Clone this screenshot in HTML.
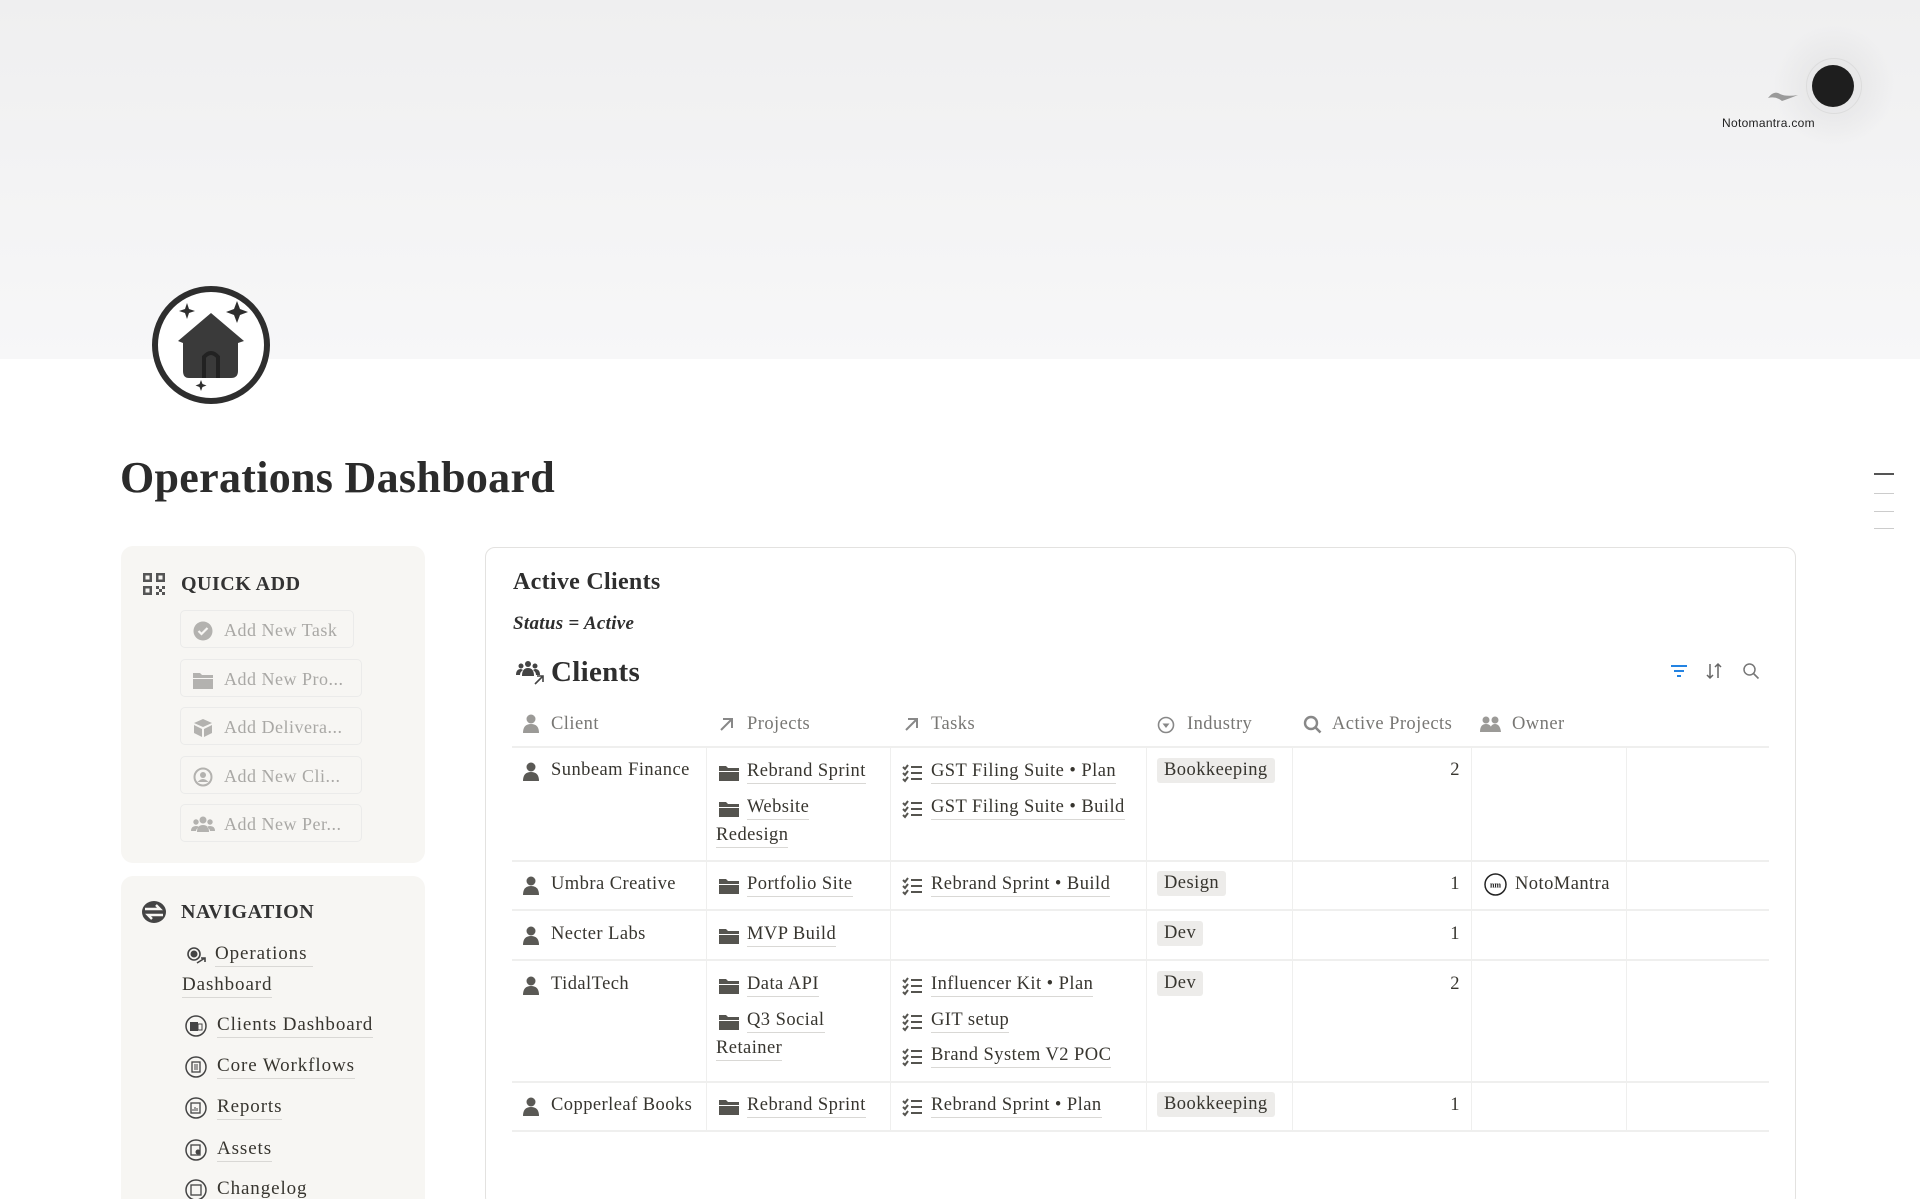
<!DOCTYPE html>
<html style="overflow:hidden;width:1920px;height:1199px"><head><meta charset="utf-8"><style>
*{margin:0;padding:0;box-sizing:border-box}
body{width:1920px;height:1199px;overflow:hidden;background:#fff;position:relative;font-family:"Liberation Serif",serif;color:#37352f}
.a{position:absolute}
.t{position:absolute;font-size:18.5px;line-height:24px;white-space:nowrap;color:#37352f;letter-spacing:0.45px}
.n{font-size:19px;letter-spacing:0.9px}
.u{border-bottom:1px solid #d9d8d5}
.h{color:#787774}
.btn{position:absolute;left:180px;height:38px;border:1px solid #ebebea;border-radius:5px;background:#f7f6f3}
.btn span{position:absolute;left:43px;top:7px;font-size:18px;line-height:24px;color:#a9a8a5;white-space:nowrap;letter-spacing:0.5px}
.btn svg{position:absolute;left:12px;top:10px}
.hl{position:absolute;left:512px;width:1257px;height:2px;background:#efefee}
.vl{position:absolute;width:1px;background:#efefee}
.tag{position:absolute;height:25px;padding:0 7px;background:#edecea;border-radius:3px;font-size:18.5px;line-height:25px;color:#37352f;letter-spacing:0.45px}
</style></head><body>
<div class="a" style="left:0;top:0;width:1920px;height:359px;background:linear-gradient(#efeff0,#f7f7f8)"></div>
<div class="a" style="left:1773px;top:25px;width:122px;height:122px;border-radius:50%;background:radial-gradient(circle,#e2e2e3 0%,rgba(240,240,241,0) 70%)"></div>
<div class="a" style="left:1806px;top:58px;width:56px;height:56px;border-radius:50%;border:1px solid #dcdcdc"></div>
<div class="a" style="left:1812px;top:65px;width:42px;height:42px;border-radius:50%;background:#1e1e1e"></div>
<svg class="a" style="left:1766px;top:88px" width="34" height="16"><path d="M2 10 Q8 2 14 6 Q20 9 32 7 Q22 11 16 13 Q10 8 2 10Z" fill="#9a9a9a"/></svg>
<div class="a" style="left:1722px;top:116px;font:12px 'Liberation Sans',sans-serif;color:#222;letter-spacing:0.3px">Notomantra.com</div>

<svg class="a" style="left:151px;top:285px" width="120" height="120" viewBox="0 0 120 120">
<circle cx="60" cy="60" r="56" fill="#fff" stroke="#2e2e2e" stroke-width="6"/>
<path d="M27 56 L60 28 L93 56 L87 58 V86 Q87 93 80 93 H38 Q32 93 32 86 V58Z" fill="#3a3a3a"/>
<path d="M53 93 V72 Q60 64 67 72 V93" fill="none" stroke="#222" stroke-width="4"/>
<path d="M36 18 l2 6 6 2-6 2-2 6-2-6-6-2 6-2z M86 16 l3 8 8 3-8 3-3 8-3-8-8-3 8-3z M50 95 l1.5 4 4 1.5-4 1.5-1.5 4-1.5-4-4-1.5 4-1.5z" fill="#2e2e2e"/>
</svg>
<div class="a" style="left:120px;top:450px;font-size:44px;line-height:56px;font-weight:bold;color:#2b2b2b;letter-spacing:0.3px">Operations Dashboard</div>

<div class="a" style="left:1874px;top:473px;width:20px;height:2px;background:#555"></div>
<div class="a" style="left:1874px;top:493px;width:20px;height:1px;background:#ccc"></div>
<div class="a" style="left:1874px;top:511px;width:20px;height:1px;background:#ccc"></div>
<div class="a" style="left:1874px;top:528px;width:20px;height:1px;background:#ccc"></div>

<div class="a" style="left:121px;top:546px;width:304px;height:317px;background:#f7f6f3;border-radius:12px"></div>
<div class="a" style="left:121px;top:876px;width:304px;height:323px;background:#f7f6f3;border-radius:12px 12px 0 0"></div>
<svg class="a" style="left:143px;top:573px" width="22" height="22"><g fill="#555"><path d="M0 0h9v9H0zM2.5 2.5v4h4v-4zM13 0h9v9h-9zM15.5 2.5v4h4v-4zM0 13h9v9H0zM2.5 15.5v4h4v-4z"/><path d="M13 13h3v3h-3zM19 13h3v3h-3zM16 16h3v3h-3zM13 19h3v3h-3zM19 19h3v3h-3z"/></g></svg>
<div class="a" style="left:181px;top:572px;font-size:20px;line-height:24px;font-weight:bold;color:#333;letter-spacing:0.5px">QUICK ADD</div>
<div class="btn" style="top:610px;width:174px"><svg width="20" height="20"><circle cx="10" cy="10" r="9.5" fill="#b3b2af"/><path d="M5.5 10l3 3 6-6" stroke="#f7f6f3" stroke-width="2.2" fill="none"/></svg><span>Add New Task</span></div>
<div class="btn" style="top:659px;width:182px"><svg width="20" height="20"><path d="M0 3h7l2 2h11v3H0zM0 9h20v10H0z" fill="#b3b2af"/></svg><span>Add New Pro...</span></div>
<div class="btn" style="top:707px;width:182px"><svg width="20" height="20"><path d="M1 5l9-4 9 4-9 4zM1 7l8 4v8l-8-4zM19 7l-8 4v8l8-4z" fill="#b3b2af"/></svg><span>Add Delivera...</span></div>
<div class="btn" style="top:756px;width:182px"><svg width="20" height="20"><circle cx="10" cy="10" r="8.5" fill="none" stroke="#b3b2af" stroke-width="2"/><circle cx="10" cy="8" r="3" fill="#b3b2af"/><path d="M4.5 15q5.5-6 11 0" fill="#b3b2af"/></svg><span>Add New Cli...</span></div>
<div class="btn" style="top:804px;width:182px"><svg width="24" height="20" style="left:10px"><g fill="#b3b2af"><circle cx="12" cy="5" r="3.5"/><circle cx="5" cy="7" r="2.7"/><circle cx="19" cy="7" r="2.7"/><path d="M6 17q0-7 6-7t6 7zM0 16q0-5 5-5 2 0 3 1-3 2-3 4zM24 16q0-5-5-5-2 0-3 1 3 2 3 4z"/></g></svg><span>Add New Per...</span></div>

<svg class="a" style="left:142px;top:901px" width="24" height="22"><ellipse cx="12" cy="11" rx="12" ry="11" fill="#444"/><path d="M3 8h15l-4-4M21 14H6l4 4" stroke="#f7f6f3" stroke-width="2.4" fill="none"/></svg>
<div class="a" style="left:181px;top:900px;font-size:20px;line-height:24px;font-weight:bold;color:#333;letter-spacing:0.5px">NAVIGATION</div>
<svg class="a" style="left:186px;top:946px" width="22" height="20"><circle cx="8" cy="8" r="6" fill="none" stroke="#444" stroke-width="1.6"/><circle cx="8" cy="8" r="3.5" fill="#444"/><path d="M11 17l8-5M15 12h4v4" stroke="#444" stroke-width="1.6" fill="none"/></svg>
<div class="t n u" style="left:215px;top:942px">Operations&nbsp;</div>
<div class="t n u" style="left:182px;top:973px">Dashboard</div>
<svg class="a" style="left:185px;top:1015px" width="22" height="22"><circle cx="11" cy="11" r="10" fill="none" stroke="#444" stroke-width="1.5"/><rect x="5" y="7" width="8" height="9" fill="#444"/><rect x="13" y="9" width="4" height="6" fill="none" stroke="#444"/></svg>
<div class="t n u" style="left:217px;top:1013px">Clients Dashboard</div>
<svg class="a" style="left:185px;top:1056px" width="22" height="22"><circle cx="11" cy="11" r="10" fill="none" stroke="#444" stroke-width="1.5"/><rect x="7" y="6" width="8" height="10" fill="none" stroke="#444" stroke-width="1.3"/><path d="M9 9h4M9 11h4M9 13h4" stroke="#444"/></svg>
<div class="t n u" style="left:217px;top:1054px">Core Workflows</div>
<svg class="a" style="left:185px;top:1097px" width="22" height="22"><circle cx="11" cy="11" r="10" fill="none" stroke="#444" stroke-width="1.5"/><rect x="6" y="6" width="9" height="10" fill="none" stroke="#444" stroke-width="1.3"/><path d="M8 14v-2M10 14v-4M12 14v-3" stroke="#444"/></svg>
<div class="t n u" style="left:217px;top:1095px">Reports</div>
<svg class="a" style="left:185px;top:1139px" width="22" height="22"><circle cx="11" cy="11" r="10" fill="none" stroke="#444" stroke-width="1.5"/><rect x="6" y="6" width="9" height="10" fill="none" stroke="#444" stroke-width="1.3"/><circle cx="13" cy="13" r="2.5" fill="#444"/></svg>
<div class="t n u" style="left:217px;top:1137px">Assets</div>
<svg class="a" style="left:185px;top:1179px" width="22" height="20"><circle cx="11" cy="11" r="10" fill="none" stroke="#444" stroke-width="1.5"/><rect x="6" y="6" width="10" height="10" fill="none" stroke="#444" stroke-width="1.3"/></svg>
<div class="t n" style="left:217px;top:1177px">Changelog</div>

<div class="a" style="left:485px;top:547px;width:1311px;height:660px;border:1.5px solid #e3e2e0;border-radius:10px"></div>
<div class="a" style="left:513px;top:566px;font-size:24px;line-height:32px;font-weight:bold;color:#2e2e2e;letter-spacing:0.3px">Active Clients</div>
<div class="a" style="left:513px;top:612px;font-size:19px;line-height:24px;font-style:italic;font-weight:bold;color:#2e2e2e;letter-spacing:0.3px">Status = Active</div>
<svg class="a" style="left:514px;top:660px" width="32" height="26"><g fill="#444"><circle cx="14" cy="4" r="3"/><circle cx="7" cy="6" r="2.5"/><circle cx="21" cy="6" r="2.5"/><path d="M8 16q0-8 6-8t6 8zM2 15q0-6 5-6l2 1q-3 2-3 5zM26 15q0-6-5-6l-2 1q3 2 3 5z"/></g><path d="M21 24l8-8M23 16h6v6" stroke="#444" stroke-width="1.6" fill="none"/></svg>
<div class="a" style="left:551px;top:654px;font-size:29px;line-height:36px;font-weight:bold;color:#2e2e2e;letter-spacing:0.3px">Clients</div>
<svg class="a" style="left:1670px;top:663px" width="18" height="16"><path d="M1 3h16M4 8h10M7 13h4" stroke="#2383e2" stroke-width="2"/></svg>
<svg class="a" style="left:1705px;top:662px" width="18" height="18"><path d="M5 2v14M2 13l3 3 3-3M13 16V2M10 5l3-3 3 3" stroke="#666" stroke-width="1.5" fill="none"/></svg>
<svg class="a" style="left:1742px;top:662px" width="18" height="18"><circle cx="7.5" cy="7.5" r="5.5" fill="none" stroke="#777" stroke-width="1.5"/><path d="M11.5 11.5l5 5" stroke="#777" stroke-width="1.6"/></svg>

<svg class="a" style="left:522px;top:714px" width="18" height="20"><circle cx="9" cy="5" r="4.5" fill="#9b9a97"/><path d="M1 19q0-9 8-9t8 9z" fill="#9b9a97"/></svg>
<div class="t h" style="left:551px;top:712px">Client</div>
<svg class="a" style="left:718px;top:716px" width="16" height="16"><path d="M3 14L13 4M5 3h9v9" stroke="#888" stroke-width="2" fill="none"/></svg>
<div class="t h" style="left:747px;top:712px">Projects</div>
<svg class="a" style="left:903px;top:716px" width="16" height="16"><path d="M3 14L13 4M5 3h9v9" stroke="#888" stroke-width="2" fill="none"/></svg>
<div class="t h" style="left:931px;top:712px">Tasks</div>
<svg class="a" style="left:1157px;top:716px" width="18" height="18"><circle cx="9" cy="9" r="7.5" fill="none" stroke="#888" stroke-width="1.6"/><path d="M5.5 7.5h7l-3.5 4.5z" fill="#888"/></svg>
<div class="t h" style="left:1187px;top:712px">Industry</div>
<svg class="a" style="left:1303px;top:715px" width="19" height="19"><circle cx="8" cy="8" r="6" fill="none" stroke="#888" stroke-width="2.4"/><path d="M12.5 12.5l5 5" stroke="#888" stroke-width="2.6"/></svg>
<div class="t h" style="left:1332px;top:712px">Active Projects</div>
<svg class="a" style="left:1480px;top:716px" width="22" height="16"><g fill="#9b9a97"><circle cx="6" cy="4" r="3.5"/><circle cx="15" cy="4" r="3.5"/><path d="M0 16q0-8 6-8t6 8zM10 16q0-8 5-8t6 8z"/></g></svg>
<div class="t h" style="left:1512px;top:712px">Owner</div>

<div class="hl" style="top:746px"></div>
<div class="hl" style="top:860px"></div>
<div class="hl" style="top:909px"></div>
<div class="hl" style="top:959px"></div>
<div class="hl" style="top:1081px"></div>
<div class="hl" style="top:1130px"></div>
<div class="vl" style="left:706px;top:748px;height:383px"></div>
<div class="vl" style="left:890px;top:748px;height:383px"></div>
<div class="vl" style="left:1146px;top:748px;height:383px"></div>
<div class="vl" style="left:1292px;top:748px;height:383px"></div>
<div class="vl" style="left:1471px;top:748px;height:383px"></div>
<div class="vl" style="left:1626px;top:748px;height:383px"></div>

<svg class="a" style="left:522px;top:762px" width="18" height="20"><circle cx="9" cy="5" r="4.5" fill="#5a5955"/><path d="M1 19q0-9 8-9t8 9z" fill="#5a5955"/></svg>
<svg class="a" style="left:522px;top:876px" width="18" height="20"><circle cx="9" cy="5" r="4.5" fill="#5a5955"/><path d="M1 19q0-9 8-9t8 9z" fill="#5a5955"/></svg>
<svg class="a" style="left:522px;top:926px" width="18" height="20"><circle cx="9" cy="5" r="4.5" fill="#5a5955"/><path d="M1 19q0-9 8-9t8 9z" fill="#5a5955"/></svg>
<svg class="a" style="left:522px;top:976px" width="18" height="20"><circle cx="9" cy="5" r="4.5" fill="#5a5955"/><path d="M1 19q0-9 8-9t8 9z" fill="#5a5955"/></svg>
<svg class="a" style="left:522px;top:1097px" width="18" height="20"><circle cx="9" cy="5" r="4.5" fill="#5a5955"/><path d="M1 19q0-9 8-9t8 9z" fill="#5a5955"/></svg>
<div class="t" style="left:551px;top:758px">Sunbeam Finance</div>
<div class="t" style="left:551px;top:872px">Umbra Creative</div>
<div class="t" style="left:551px;top:922px">Necter Labs</div>
<div class="t" style="left:551px;top:972px">TidalTech</div>
<div class="t" style="left:551px;top:1093px">Copperleaf Books</div>

<svg class="a" style="left:719px;top:764px" width="20" height="18"><path d="M0 2h7l2 2h11v3H0zM0 8h20v9H0z" fill="#55544f"/></svg>
<svg class="a" style="left:719px;top:800px" width="20" height="18"><path d="M0 2h7l2 2h11v3H0zM0 8h20v9H0z" fill="#55544f"/></svg>
<svg class="a" style="left:719px;top:877px" width="20" height="18"><path d="M0 2h7l2 2h11v3H0zM0 8h20v9H0z" fill="#55544f"/></svg>
<svg class="a" style="left:719px;top:927px" width="20" height="18"><path d="M0 2h7l2 2h11v3H0zM0 8h20v9H0z" fill="#55544f"/></svg>
<svg class="a" style="left:719px;top:977px" width="20" height="18"><path d="M0 2h7l2 2h11v3H0zM0 8h20v9H0z" fill="#55544f"/></svg>
<svg class="a" style="left:719px;top:1013px" width="20" height="18"><path d="M0 2h7l2 2h11v3H0zM0 8h20v9H0z" fill="#55544f"/></svg>
<svg class="a" style="left:719px;top:1098px" width="20" height="18"><path d="M0 2h7l2 2h11v3H0zM0 8h20v9H0z" fill="#55544f"/></svg>
<div class="t u" style="left:747px;top:759px">Rebrand Sprint</div>
<div class="t u" style="left:747px;top:795px">Website</div>
<div class="t u" style="left:716px;top:823px">Redesign</div>
<div class="t u" style="left:747px;top:872px">Portfolio Site</div>
<div class="t u" style="left:747px;top:922px">MVP Build</div>
<div class="t u" style="left:747px;top:972px">Data API</div>
<div class="t u" style="left:747px;top:1008px">Q3 Social</div>
<div class="t u" style="left:716px;top:1036px">Retainer</div>
<div class="t u" style="left:747px;top:1093px">Rebrand Sprint</div>

<svg class="a" style="left:902px;top:764px" width="21" height="19"><path d="M1 3l2 2 3-4M1 9l2 2 3-4M1 15l2 2 3-4M9 3h11M9 9h11M9 15h11" stroke="#55544f" stroke-width="2" fill="none"/></svg>
<svg class="a" style="left:902px;top:800px" width="21" height="19"><path d="M1 3l2 2 3-4M1 9l2 2 3-4M1 15l2 2 3-4M9 3h11M9 9h11M9 15h11" stroke="#55544f" stroke-width="2" fill="none"/></svg>
<svg class="a" style="left:902px;top:877px" width="21" height="19"><path d="M1 3l2 2 3-4M1 9l2 2 3-4M1 15l2 2 3-4M9 3h11M9 9h11M9 15h11" stroke="#55544f" stroke-width="2" fill="none"/></svg>
<svg class="a" style="left:902px;top:977px" width="21" height="19"><path d="M1 3l2 2 3-4M1 9l2 2 3-4M1 15l2 2 3-4M9 3h11M9 9h11M9 15h11" stroke="#55544f" stroke-width="2" fill="none"/></svg>
<svg class="a" style="left:902px;top:1013px" width="21" height="19"><path d="M1 3l2 2 3-4M1 9l2 2 3-4M1 15l2 2 3-4M9 3h11M9 9h11M9 15h11" stroke="#55544f" stroke-width="2" fill="none"/></svg>
<svg class="a" style="left:902px;top:1048px" width="21" height="19"><path d="M1 3l2 2 3-4M1 9l2 2 3-4M1 15l2 2 3-4M9 3h11M9 9h11M9 15h11" stroke="#55544f" stroke-width="2" fill="none"/></svg>
<svg class="a" style="left:902px;top:1098px" width="21" height="19"><path d="M1 3l2 2 3-4M1 9l2 2 3-4M1 15l2 2 3-4M9 3h11M9 9h11M9 15h11" stroke="#55544f" stroke-width="2" fill="none"/></svg>
<div class="t u" style="left:931px;top:759px">GST Filing Suite • Plan</div>
<div class="t u" style="left:931px;top:795px">GST Filing Suite • Build</div>
<div class="t u" style="left:931px;top:872px">Rebrand Sprint • Build</div>
<div class="t u" style="left:931px;top:972px">Influencer Kit • Plan</div>
<div class="t u" style="left:931px;top:1008px">GIT setup</div>
<div class="t u" style="left:931px;top:1043px">Brand System V2 POC</div>
<div class="t u" style="left:931px;top:1093px">Rebrand Sprint • Plan</div>

<div class="tag" style="left:1157px;top:758px">Bookkeeping</div>
<div class="tag" style="left:1157px;top:871px">Design</div>
<div class="tag" style="left:1157px;top:921px">Dev</div>
<div class="tag" style="left:1157px;top:971px">Dev</div>
<div class="tag" style="left:1157px;top:1092px">Bookkeeping</div>

<div class="t" style="left:1440px;width:20px;text-align:right;top:758px">2</div>
<div class="t" style="left:1440px;width:20px;text-align:right;top:872px">1</div>
<div class="t" style="left:1440px;width:20px;text-align:right;top:922px">1</div>
<div class="t" style="left:1440px;width:20px;text-align:right;top:972px">2</div>
<div class="t" style="left:1440px;width:20px;text-align:right;top:1093px">1</div>

<svg class="a" style="left:1484px;top:873px" width="23" height="23"><circle cx="11.5" cy="11.5" r="10.5" fill="#fff" stroke="#222" stroke-width="1.5"/><text x="11.5" y="14.5" font-size="8" text-anchor="middle" font-family="Liberation Serif" font-weight="bold" fill="#222">nm</text></svg>
<div class="t" style="left:1515px;top:872px">NotoMantra</div>
</body></html>
